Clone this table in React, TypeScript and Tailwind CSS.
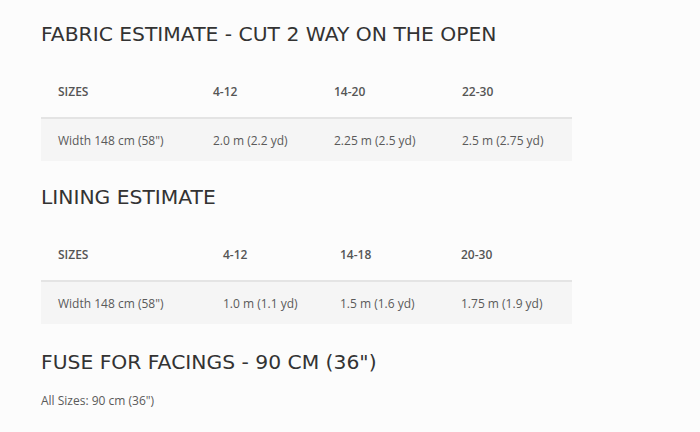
import React from "react";

type Table = { cols: number[]; head: string[]; row: string[] };

const t1: Table = {
  cols: [155, 121, 128, 127],
  head: ["SIZES", "4-12", "14-20", "22-30"],
  row: ["Width 148 cm (58\")", "2.0 m (2.2 yd)", "2.25 m (2.5 yd)", "2.5 m (2.75 yd)"],
};
const t2: Table = {
  cols: [165, 117, 121, 128],
  head: ["SIZES", "4-12", "14-18", "20-30"],
  row: ["Width 148 cm (58\")", "1.0 m (1.1 yd)", "1.5 m (1.6 yd)", "1.75 m (1.9 yd)"],
};

const headFont = { fontFamily: '"DejaVu Sans", "Liberation Sans", sans-serif' };
const bodyFont = { fontFamily: '"Open Sans", "Liberation Sans", sans-serif' };

function SizeTable({ t }: { t: Table }) {
  return (
    <div className="w-[531px]">
      <div className="flex h-[56px] items-center border-b-2 border-[#e4e4e4] pt-[3px]">
        {t.head.map((h, i) => (
          <div
            key={i}
            style={{ width: t.cols[i], ...bodyFont }}
            className="pl-[17px] text-[12px] font-semibold text-[#555555]"
          >
            {h}
          </div>
        ))}
      </div>
      <div className="flex h-[42px] items-center bg-[#f5f5f5] pt-[1px]">
        {t.row.map((c, i) => (
          <div
            key={i}
            style={{ width: t.cols[i], ...bodyFont }}
            className="pl-[17px] text-[12px] text-[#5a5a5a]"
          >
            {c}
          </div>
        ))}
      </div>
    </div>
  );
}

function Heading({ children }: { children: React.ReactNode }) {
  return (
    <h2 style={headFont} className="text-[20.3px] leading-[27px] text-[#333333]">
      {children}
    </h2>
  );
}

export default function App() {
  return (
    <div className="min-h-[432px] w-[700px] bg-[#fcfcfc] pl-[41px] pt-[21px]">
      <Heading>FABRIC ESTIMATE - CUT 2 WAY ON THE OPEN</Heading>
      <div className="mt-[15px]">
        <SizeTable t={t1} />
      </div>
      <div className="mt-[23px]">
        <Heading>LINING ESTIMATE</Heading>
      </div>
      <div className="mt-[15px]">
        <SizeTable t={t2} />
      </div>
      <div className="mt-[25px]">
        <Heading>FUSE FOR FACINGS - 90 CM (36")</Heading>
      </div>
      <p style={bodyFont} className="mt-[16px] text-[12px] leading-[18px] text-[#5a5a5a]">
        All Sizes: 90 cm (36")
      </p>
    </div>
  );
}
